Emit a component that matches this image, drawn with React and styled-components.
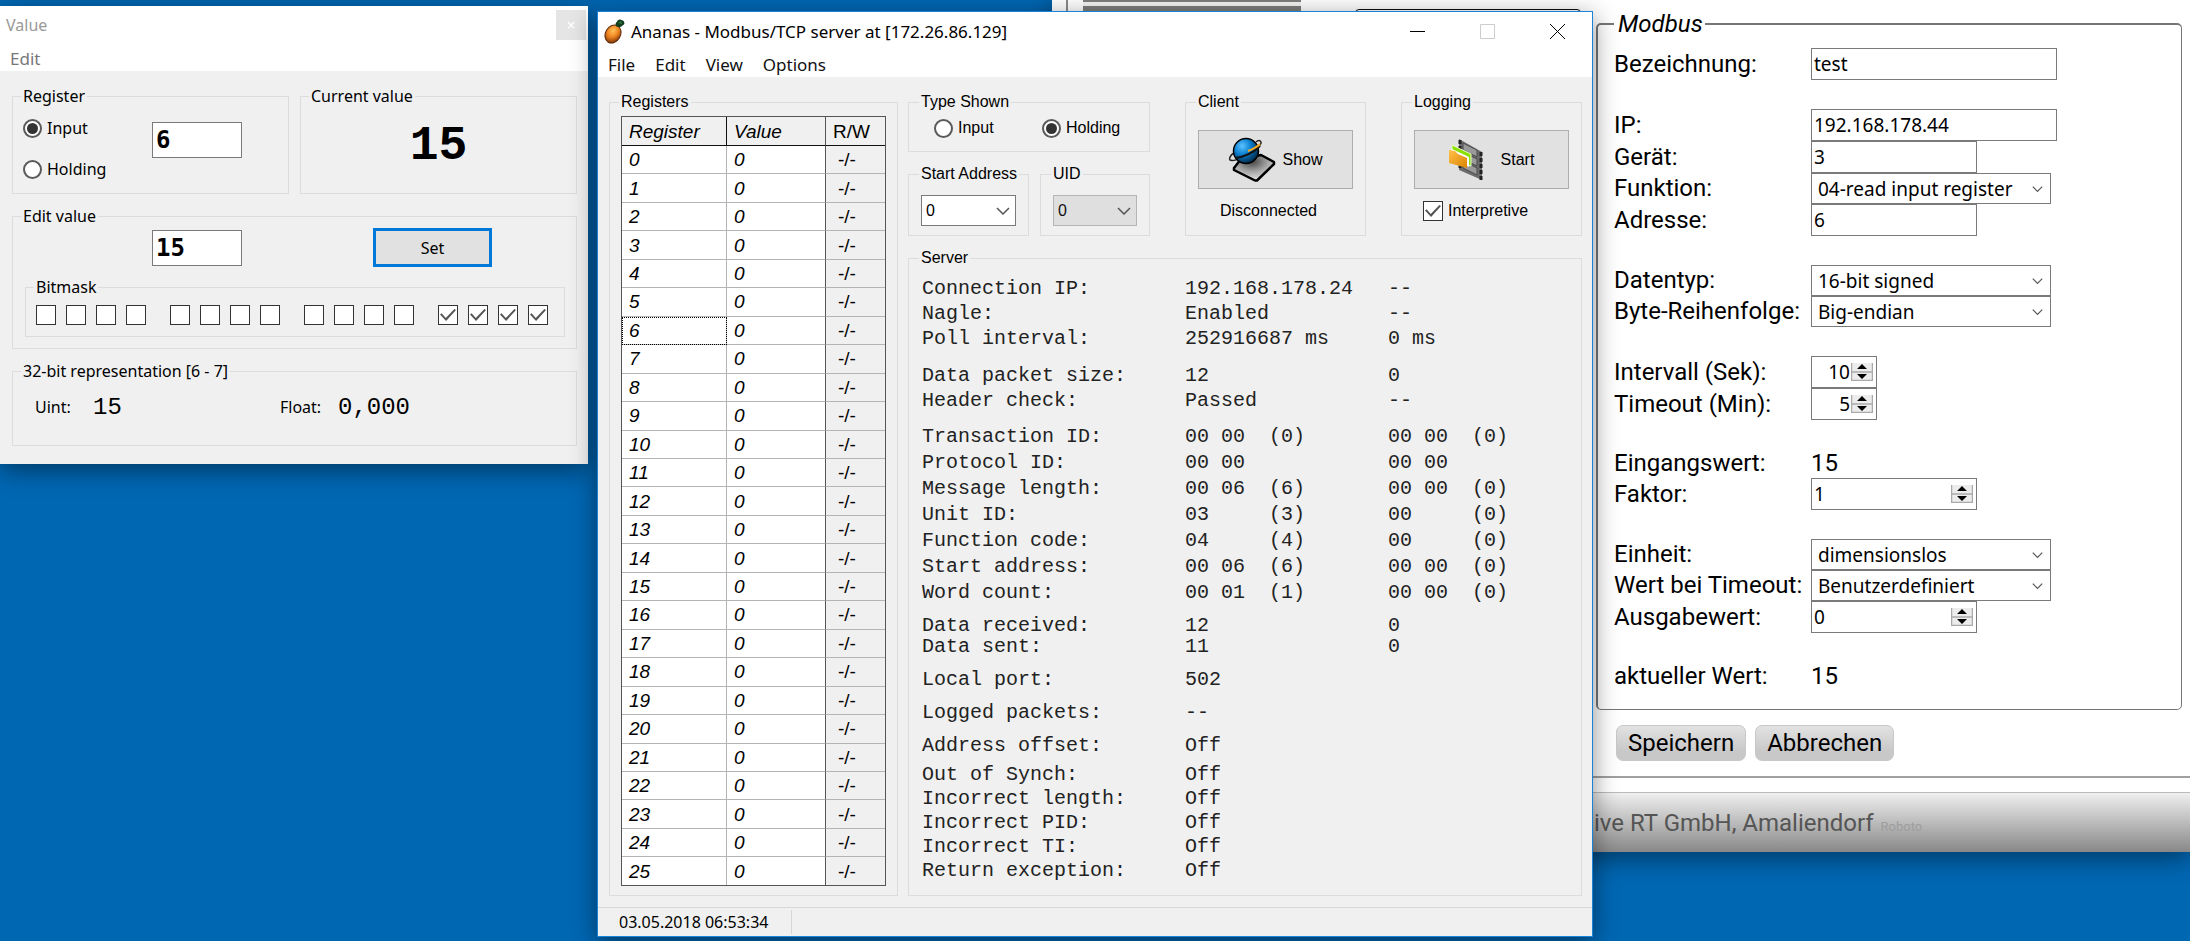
import React from "react";
import styled, { createGlobalStyle } from "styled-components";

const GlobalStyle = createGlobalStyle`
  * {
    box-sizing: border-box;
  }

  body {
    margin: 0;
    background: #0067b3;
    font-family: "Noto Sans", sans-serif;
    color: #000;
  }

  button, input, select {
    margin: 0;
    font-family: inherit;
    font-size: inherit;
    color: inherit;
  }
`;

const Desktop = styled.main`
  position: relative;
  min-height: 100vh;
  overflow: hidden;
  background: #0067b3;
`;

/* windows */

const Window = styled.section`
  position: absolute;
  background: #f0f0f0;
  box-shadow: 0 6px 24px rgba(0, 0, 0, 0.45);
`;

const ValueWindow = styled(Window)`
  left: 0;
  top: 6px;
  width: 588px;
  font-size: 16px;
`;

const ServerWindow = styled(Window)`
  left: 597px;
  top: 11px;
  width: 996px;
  border: 1px solid #1883d7;
  font-family: "Liberation Sans", Arial, sans-serif;
  font-size: 16px;
`;

const BrowserWindow = styled(Window)`
  left: 1052px;
  right: 0;
  top: 0;
  background: #fff;
  font-family: Roboto, sans-serif;
  font-size: 24px;
`;

const TitleBar = styled.header`
  display: flex;
  align-items: center;
  height: 40px;
  padding-left: 6px;
  padding-bottom: 2px;
  gap: 6px;
  background: #fff;
  font-family: "Noto Sans", sans-serif;
  font-size: ${(props) => (props.$inactive ? "16px" : "17px")};
  color: ${(props) => (props.$inactive ? "#999" : "#000")};
`;

const Title = styled.h1`
  flex: 1;
  margin: 0;
  font-size: inherit;
  font-weight: 400;
`;

const WindowButtons = styled.div`
  display: flex;
`;

const WindowButton = styled.button`
  display: flex;
  align-items: center;
  justify-content: center;
  width: 70px;
  height: 36px;
  padding: 0;
  border: 0;
  background: #fff;
`;

const GreyClose = styled.button`
  width: 30px;
  height: 30px;
  margin-right: 2px;
  padding: 0;
  border: 0;
  background: #e5e5e5;
  color: #fff;
`;

const MenuBar = styled.nav`
  display: flex;
  height: 25px;
  background: #fff;
  font-family: "Noto Sans", sans-serif;
  font-size: 17px;
`;

const MenuButton = styled.button`
  padding: 0 10px;
  border: 0;
  background: transparent;
  line-height: 24px;
  color: ${(props) => (props.$inactive ? "#777" : "#111")};
`;

/* shared controls */

const Group = styled.fieldset`
  min-width: 0;
  margin: 0;
  padding: 0 ${(props) => props.$pad || "10px"};
  border: 1px solid #dcdcdc;
`;

const GroupTitle = styled.legend`
  margin-left: -2px;
  padding: 0 2px;
  line-height: 20px;
  white-space: nowrap;
`;

const OptionLabel = styled.label`
  display: flex;
  align-items: center;
  gap: 5px;
  height: 20px;
`;

const Radio = styled.input.attrs({ type: "radio" })`
  appearance: none;
  display: grid;
  place-content: center;
  width: 19px;
  height: 19px;
  border: 2px solid #5a5a5a;
  border-radius: 50%;
  background: #fff;

  &:checked::before {
    content: "";
    width: 11px;
    height: 11px;
    border-radius: 50%;
    background: #333;
  }
`;

const Checkbox = styled.input.attrs({ type: "checkbox" })`
  appearance: none;
  display: grid;
  place-content: center;
  width: 20px;
  height: 20px;
  border: 1px solid #333;
  background: #fff;

  &:checked::before {
    content: "";
    width: 16px;
    height: 12px;
    background: #555;
    clip-path: polygon(0 45%, 10% 36%, 36% 76%, 90% 0, 100% 8%, 38% 100%);
  }
`;

const PushButton = styled.button`
  display: flex;
  align-items: center;
  justify-content: center;
  padding: 0;
  border: 1px solid #adadad;
  background: #e1e1e1;
`;

const SelectBox = styled.span`
  position: relative;
  display: block;
  width: ${(props) => props.$width};

  svg {
    position: absolute;
    right: ${(props) => props.$arrow || "6px"};
    top: 50%;
    margin-top: -4px;
    pointer-events: none;
  }
`;

const Select = styled.select`
  appearance: none;
  display: block;
  width: 100%;
  height: 31px;
  padding: 0 4px;
  border: 1px solid #7a7a7a;
  border-radius: 0;
  background: #fff;

  &:disabled {
    border-color: #b5b5b5;
    background: #dfdfdf;
    color: #111;
    opacity: 1;
  }
`;

/* value window */

const ValueBody = styled.div`
  display: flex;
  flex-direction: column;
  gap: 12px;
  padding: 15px 11px 18px 12px;
`;

const TwoColumns = styled.div`
  display: grid;
  grid-template-columns: 1fr 1fr;
  gap: 11px;
`;

const RegisterRow = styled.div`
  display: flex;
  padding: 12px 0 14px;
`;

const RadioColumn = styled.div`
  display: flex;
  flex-direction: column;
  gap: 21px;
  width: 129px;
`;

const NumberBox = styled.input.attrs({ type: "text" })`
  width: 90px;
  height: 36px;
  margin-top: 4px;
  padding: 0 3px;
  border: 1px solid #7a7a7a;
  background: #fff;
  font-family: "DejaVu Sans Mono", monospace;
  font-size: 24px;
  font-weight: 700;
`;

const BigValue = styled.output`
  display: block;
  padding-top: 12px;
  font-family: "Liberation Mono", monospace;
  font-size: 48px;
  font-weight: 700;
  line-height: 56px;
  text-align: center;
`;

const EditRow = styled.div`
  display: flex;
  gap: 131px;
  padding: 0 0 10px 127px;
`;

const SetButton = styled(PushButton)`
  width: 119px;
  height: 39px;
  margin-top: 2px;
  border: 3px solid #0078d7;
`;

const BitRow = styled.div`
  display: flex;
  gap: 24px;
  padding: 8px 0 11px;
`;

const Nibble = styled.div`
  display: flex;
  gap: 10px;
`;

const EditGroup = styled(Group)`
  padding: 0 11px 11px 12px;

  > ${GroupTitle} {
    margin-left: -4px;
  }
`;

const WordRow = styled.div`
  display: grid;
  grid-template-columns: 58px 187px 58px 1fr;
  align-items: center;
  padding: 9px 12px 20px;
  line-height: 35px;
`;

const WordValue = styled.output`
  font-family: "Liberation Mono", monospace;
  font-size: 24px;
`;

/* server window */

const ServerBody = styled.div`
  display: grid;
  grid-template-columns: 289px 1fr;
  gap: 10px;
  padding: 15px 10px 11px 11px;
`;

const ServerColumn = styled.div`
  display: flex;
  flex-direction: column;
  gap: 12px;
`;

const ControlRow = styled.div`
  display: grid;
  grid-template-columns: 1fr 181px 181px;
  gap: 35px;
`;

const TypeRow = styled.div`
  display: grid;
  grid-template-columns: 108px 1fr;
  padding: 6px 0 13px 13px;
`;

const SmallGroups = styled.div`
  display: grid;
  grid-template-columns: 121px 1fr;
  gap: 11px;
`;

const SelectPad = styled.div`
  padding: 11px 0 9px;
`;

const ActionPad = styled.div`
  display: flex;
  flex-direction: column;
  align-items: flex-start;
  gap: 12px;
  padding-top: 18px;
`;

const ActionButton = styled(PushButton)`
  gap: ${(props) => props.$gap};
  width: 100%;
  height: 59px;
`;

const ActionNote = styled.div`
  padding-left: ${(props) => props.$indent};
  line-height: 20px;
`;

const RegisterTable = styled.table`
  width: 100%;
  height: 770px;
  margin: 4px 0 9px;
  table-layout: fixed;
  border: 1px solid #555;
  border-spacing: 0;
  background: #fff;
  font-size: 19px;
  font-style: italic;

  th, td {
    padding: 1px 0 0 7px;
    border-right: 1px solid #b4b4b4;
    border-bottom: 1px solid #b4b4b4;
    font-weight: 400;
    text-align: left;
  }

  th {
    height: 29px;
    border-color: #111;
    background: #f0f0f0;
  }

  tr > :nth-child(2) {
    border-right-color: #555;
  }

  tr > :last-child {
    border-right: 0;
    background: #f0f0f0;
    font-style: normal;
  }

  tbody tr:last-child td {
    border-bottom: 0;
  }

  td:last-child {
    padding-left: 12px;
  }
`;

const RegisterCell = styled.td`
  outline: ${(props) => (props.$focused ? "1px dotted #000" : "none")};
  outline-offset: -1px;
`;

const InfoTable = styled.table`
  width: 100%;
  margin: 8px 0 12px 1px;
  table-layout: fixed;
  border-spacing: 0;
  font-family: "Liberation Mono", monospace;
  font-size: 20px;
  color: #222;
`;

const InfoBlock = styled.tbody`
  th, td {
    padding: 0;
    font-weight: 400;
    text-align: left;
    white-space: pre;
    line-height: ${(props) => props.$row}px;
  }

  tr:first-child > * {
    padding-top: ${(props) => props.$gap}px;
  }
`;

const StatusBar = styled.footer`
  display: flex;
  height: 29px;
  padding: 2px 0;
  border-top: 1px solid #d7d7d7;
  font-family: "Noto Sans", sans-serif;
`;

const StatusCell = styled.span`
  width: 194px;
  padding-left: 21px;
  border-right: 1px solid #d7d7d7;
  line-height: 24px;
`;

/* browser window */

const Page = styled.div`
  display: grid;
  grid-template-columns: 528px 1fr;
  margin-left: 14px;
  border-left: 2px solid #8a8a8a;
  border-bottom: 2px solid #a0a0a0;
`;

const SideMenu = styled.div`
  display: flex;
  justify-content: space-between;
  align-items: flex-start;
  padding: 0 15px 0 15px;
`;

const SideBars = styled.div`
  width: 218px;
  height: 30px;
  border-top: 2px solid #7d7d7b;
  background: linear-gradient(#f4f4f4 4px, #7d7d7b 4px);
`;

const SideBox = styled.div`
  width: 226px;
  height: 30px;
  margin-top: 9px;
  border: 1px solid #111;
  border-radius: 4px;
`;

const Form = styled.form`
  padding: 10px 8px 15px 0;
`;

const FormGroup = styled.fieldset`
  margin: 0;
  padding: 10px 16px 18px;
  border: 2px solid #767676;
  border-bottom-width: 1px;
  border-right-width: 1px;
  border-radius: 5px;
`;

const FormTitle = styled.legend`
  padding: 0 2px 0 4px;
  line-height: 28px;
  font-style: italic;
`;

const FieldRow = styled.div`
  display: grid;
  grid-template-columns: 197px 1fr;
  align-items: center;
  margin-top: ${(props) => (props.$spaced ? "29px" : 0)};
  line-height: 29px;
`;

const TextInput = styled.input.attrs({ type: "text" })`
  width: ${(props) => props.$width};
  height: 32px;
  padding: 0 2px;
  border: 1px solid #7a7a7a;
  font-family: "Noto Sans", sans-serif;
  font-size: 19px;
`;

const NumberField = styled.span`
  display: flex;
  align-items: center;
  width: ${(props) => props.$width};
  height: 32px;
  padding-right: 3px;
  border: 1px solid #7a7a7a;
`;

const NumberInput = styled.input.attrs({ type: "number" })`
  flex: 1;
  min-width: 0;
  height: 30px;
  padding: 0 1px 0 2px;
  border: 0;
  background: transparent;
  appearance: textfield;
  font-family: "Noto Sans", sans-serif;
  font-size: 19px;
  text-align: ${(props) => props.$align || "left"};

  &::-webkit-inner-spin-button {
    display: none;
  }
`;

const FormSelect = styled(Select)`
  font-family: "Noto Sans", sans-serif;
  font-size: 19px;
  padding: 0 6px;
`;

const FormActions = styled.div`
  display: flex;
  gap: 9px;
  padding: 15px 0 0 20px;
`;

const FormButton = styled.button`
  height: 36px;
  padding: 0 11px;
  border: 1px solid #c8c8c8;
  border-radius: 7px;
  background: linear-gradient(#e2e2e2, #c8c8c8 75%);
  line-height: 32px;
`;

const PageFooter = styled.footer`
  display: flex;
  align-items: baseline;
  gap: 7px;
  height: 60px;
  margin-top: 14px;
  padding-left: 542px;
  border-top: 1px solid #bbb;
  background: linear-gradient(#efefef, #888);
  line-height: 60px;
  color: #555;
`;

const FontNote = styled.small`
  font-size: 13px;
  color: #9d9d9d;
`;

/* icons */

const Chevron = ({ size = 14 }) => (
  <svg width={size} height="8" viewBox="0 0 14 8" fill="none" stroke="#555" strokeWidth="1.5">
    <path d="M1 1l6 6 6-6" />
  </svg>
);

const SpinArrows = () => (
  <svg width="22" height="18" viewBox="0 0 22 18">
    <rect width="22" height="18" fill="#ececec" />
    <path d="M.5 0v17.500h21V0M0 9h22" fill="none" stroke="#aaa" strokeWidth="1.500" />
    <path d="M6 6l5-5 5 5zM6 11h10l-5 5z" fill="#000" />
  </svg>
);

const PineappleIcon = () => (
  <svg width="21" height="25" viewBox="0 0 21 25">
    <defs>
      <radialGradient id="fruit" cx=".4" cy=".35" r=".7">
        <stop offset="0" stopColor="#ffc35a" />
        <stop offset=".5" stopColor="#ee8420" />
        <stop offset="1" stopColor="#7a3205" />
      </radialGradient>
    </defs>
    <ellipse cx="9" cy="15" rx="7.500" ry="9.500" transform="rotate(30 9 15)" fill="url(#fruit)" stroke="#5b2a0a" />
    <path d="M12 7c-1-2 0-4 1-4 0-2 3-3 4-2 2 0 3 1 3 2 1 1 0 3-1 3-1 2-5 3-7 1z" fill="#123d1e" />
    <path d="M14 4l3-2 1 3z" fill="#2f7a45" />
  </svg>
);

const GlobeIcon = () => (
  <svg width="48" height="46" viewBox="0 0 48 46">
    <defs>
      <radialGradient id="globe" cx=".35" cy=".3" r=".75">
        <stop offset="0" stopColor="#5cc4ff" />
        <stop offset=".45" stopColor="#0b7fd0" />
        <stop offset="1" stopColor="#01243f" />
      </radialGradient>
      <radialGradient id="pad" cx=".45" cy=".25" r=".8">
        <stop offset="0" stopColor="#444" />
        <stop offset=".5" stopColor="#a5a5a5" />
        <stop offset="1" stopColor="#eee" />
      </radialGradient>
    </defs>
    <path d="M6 31l7-9 20-4 13 7v2L29 43.500h-2L6 33z" fill="url(#pad)" stroke="#000" strokeWidth="2.500" strokeLinejoin="round" />
    <path d="M6 16c-4 2-5 6-4 7 2 1 9 0 16-4S34 8 33 5c-1-2-3-2-5 0" fill="none" stroke="#222" strokeWidth="1.500" />
    <circle cx="18" cy="14" r="12.500" fill="url(#globe)" stroke="#000" strokeWidth="1.500" />
    <path d="M7 21c9-1 18-5 25-12" fill="none" stroke="#111" strokeWidth="2" />
    <path d="M20 14c5-2 9-4 12-7" fill="none" stroke="#f5a623" strokeWidth="2" />
  </svg>
);

const FilmIcon = () => (
  <svg width="34" height="42" viewBox="0 0 34 42">
    <defs>
      <linearGradient id="folder" x1="0" y1="0" x2="1" y2="1">
        <stop offset="0" stopColor="#ffc04a" />
        <stop offset="1" stopColor="#dc8400" />
      </linearGradient>
    </defs>
    <path d="M10 0l23 13v28L10 31z" fill="#6c6c6c" />
    <path d="M14 4l14 7v7l-14-7zM14 13l14 7v7l-14-7zM14 22l14 7v7l-14-7z" fill="#999" stroke="#4a4a4a" />
    <path d="M11 1v30M32 13v28" stroke="#222" strokeWidth="3" strokeDasharray="4 2" />
    <path d="M3 6l4 2 15 7v12L3 20z" fill="#8be000" stroke="#e8ffc0" />
    <path d="M3 10l17 8v10L3 20z" fill="#fff" />
    <path d="M0 11l6 1 3 3 9 4v10L0 24z" fill="url(#folder)" />
  </svg>
);

const infoBlocks = [
  {
    row: 25,
    gap: 0,
    lines: [
      ["Connection IP:", "192.168.178.24", "--"],
      ["Nagle:", "Enabled", "--"],
      ["Poll interval:", "252916687 ms", "0 ms"],
    ],
  },
  {
    row: 25,
    gap: 12,
    lines: [
      ["Data packet size:", "12", "0"],
      ["Header check:", "Passed", "--"],
    ],
  },
  {
    row: 26,
    gap: 11,
    lines: [
      ["Transaction ID:", "00 00  (0)", "00 00  (0)"],
      ["Protocol ID:", "00 00", "00 00"],
      ["Message length:", "00 06  (6)", "00 00  (0)"],
      ["Unit ID:", "03     (3)", "00     (0)"],
      ["Function code:", "04     (4)", "00     (0)"],
      ["Start address:", "00 06  (6)", "00 00  (0)"],
      ["Word count:", "00 01  (1)", "00 00  (0)"],
    ],
  },
  {
    row: 21,
    gap: 9,
    lines: [
      ["Data received:", "12", "0"],
      ["Data sent:", "11", "0"],
    ],
  },
  { row: 25, gap: 10, lines: [["Local port:", "502", ""]] },
  { row: 25, gap: 8, lines: [["Logged packets:", "--", ""]] },
  { row: 25, gap: 8, lines: [["Address offset:", "Off", ""]] },
  {
    row: 24,
    gap: 5,
    lines: [
      ["Out of Synch:", "Off", ""],
      ["Incorrect length:", "Off", ""],
      ["Incorrect PID:", "Off", ""],
      ["Incorrect TI:", "Off", ""],
      ["Return exception:", "Off", ""],
    ],
  },
];

const formFields = [
  { id: "name", label: "Bezeichnung:", type: "text", value: "test", width: "246px" },
  { id: "ip", label: "IP:", type: "text", value: "192.168.178.44", width: "246px", spaced: true },
  { id: "device", label: "Gerät:", type: "text", value: "3", width: "166px" },
  { id: "function", label: "Funktion:", type: "select", value: "04-read input register" },
  { id: "address", label: "Adresse:", type: "text", value: "6", width: "166px" },
  { id: "datatype", label: "Datentyp:", type: "select", value: "16-bit signed", spaced: true },
  { id: "order", label: "Byte-Reihenfolge:", type: "select", value: "Big-endian" },
  { id: "interval", label: "Intervall (Sek):", type: "number", value: "10", width: "66px", align: "right", spaced: true },
  { id: "timeout", label: "Timeout (Min):", type: "number", value: "5", width: "66px", align: "right" },
  { id: "input", label: "Eingangswert:", type: "output", value: "15", spaced: true },
  { id: "factor", label: "Faktor:", type: "number", value: "1", width: "166px" },
  { id: "unit", label: "Einheit:", type: "select", value: "dimensionslos", spaced: true },
  { id: "fallback", label: "Wert bei Timeout:", type: "select", value: "Benutzerdefiniert" },
  { id: "output", label: "Ausgabewert:", type: "number", value: "0", width: "166px" },
  { id: "current", label: "aktueller Wert:", type: "output", value: "15", spaced: true },
];

function Field({ field }) {
  if (field.type === "text") {
    return <TextInput id={field.id} $width={field.width} defaultValue={field.value} />;
  }
  if (field.type === "number") {
    return (
      <NumberField $width={field.width}>
        <NumberInput id={field.id} $align={field.align} defaultValue={field.value} />
        <SpinArrows />
      </NumberField>
    );
  }
  if (field.type === "select") {
    return (
      <SelectBox $width="240px" $arrow="8px">
        <FormSelect id={field.id}>
          <option>{field.value}</option>
        </FormSelect>
        <Chevron size={11} />
      </SelectBox>
    );
  }
  return <output id={field.id}>{field.value}</output>;
}

function Browser() {
  return (
    <BrowserWindow>
      <Page>
        <SideMenu>
          <SideBars />
          <SideBox />
        </SideMenu>
        <Form>
          <FormGroup>
            <FormTitle>Modbus</FormTitle>
            {formFields.map((field) => (
              <FieldRow key={field.id} $spaced={field.spaced}>
                <label htmlFor={field.id}>{field.label}</label>
                <Field field={field} />
              </FieldRow>
            ))}
          </FormGroup>
          <FormActions>
            <FormButton type="button">Speichern</FormButton>
            <FormButton type="button">Abbrechen</FormButton>
          </FormActions>
        </Form>
      </Page>
      <PageFooter>
        <span>ive RT GmbH, Amaliendorf</span>
        <FontNote>Roboto</FontNote>
      </PageFooter>
    </BrowserWindow>
  );
}

function ValueEditor() {
  return (
    <ValueWindow>
      <TitleBar $inactive>
        <Title>Value</Title>
        <GreyClose aria-label="Close">×</GreyClose>
      </TitleBar>
      <MenuBar>
        <MenuButton $inactive>Edit</MenuButton>
      </MenuBar>
      <ValueBody>
        <TwoColumns>
          <Group>
            <GroupTitle>Register</GroupTitle>
            <RegisterRow>
              <RadioColumn>
                <OptionLabel>
                  <Radio name="register" defaultChecked />
                  Input
                </OptionLabel>
                <OptionLabel>
                  <Radio name="register" />
                  Holding
                </OptionLabel>
              </RadioColumn>
              <NumberBox aria-label="Register" defaultValue="6" />
            </RegisterRow>
          </Group>
          <Group>
            <GroupTitle>Current value</GroupTitle>
            <BigValue>15</BigValue>
          </Group>
        </TwoColumns>
        <EditGroup>
          <GroupTitle>Edit value</GroupTitle>
          <EditRow>
            <NumberBox aria-label="Edit value" defaultValue="15" />
            <SetButton>Set</SetButton>
          </EditRow>
          <Group>
            <GroupTitle>Bitmask</GroupTitle>
            <BitRow>
              {[0, 1, 2, 3].map((nibble) => (
                <Nibble key={nibble}>
                  {[0, 1, 2, 3].map((bit) => (
                    <Checkbox
                      key={bit}
                      aria-label={`Bit ${15 - nibble * 4 - bit}`}
                      defaultChecked={nibble === 3}
                    />
                  ))}
                </Nibble>
              ))}
            </BitRow>
          </Group>
        </EditGroup>
        <Group>
          <GroupTitle>32-bit representation [6 - 7]</GroupTitle>
          <WordRow>
            <span>Uint:</span>
            <WordValue>15</WordValue>
            <span>Float:</span>
            <WordValue>0,000</WordValue>
          </WordRow>
        </Group>
      </ValueBody>
    </ValueWindow>
  );
}

function Registers() {
  return (
    <Group $pad="11px">
      <GroupTitle>Registers</GroupTitle>
      <RegisterTable>
        <colgroup>
          <col width="105" />
          <col width="99" />
          <col />
        </colgroup>
        <thead>
          <tr>
            <th>Register</th>
            <th>Value</th>
            <th>R/W</th>
          </tr>
        </thead>
        <tbody>
          {Array.from({ length: 26 }, (_, i) => (
            <tr key={i}>
              <RegisterCell $focused={i === 6}>{i}</RegisterCell>
              <td>0</td>
              <td>-/-</td>
            </tr>
          ))}
        </tbody>
      </RegisterTable>
    </Group>
  );
}

function AddressSelect({ title, disabled }) {
  return (
    <Group $pad="12px">
      <GroupTitle>{title}</GroupTitle>
      <SelectPad>
        <SelectBox $width="100%">
          <Select aria-label={title} disabled={disabled}>
            <option>0</option>
          </Select>
          <Chevron />
        </SelectBox>
      </SelectPad>
    </Group>
  );
}

function Server() {
  return (
    <ServerWindow>
      <TitleBar>
        <PineappleIcon />
        <Title>Ananas - Modbus/TCP server at [172.26.86.129]</Title>
        <WindowButtons>
          <WindowButton aria-label="Minimize">
            <svg width="15" height="15" stroke="#000"><path d="M0 7.500h15" /></svg>
          </WindowButton>
          <WindowButton aria-label="Maximize">
            <svg width="15" height="15" stroke="#ccc" fill="none"><path d="M.5 .5h14v14h-14z" /></svg>
          </WindowButton>
          <WindowButton aria-label="Close">
            <svg width="15" height="15" stroke="#000"><path d="M0 0l15 15M15 0L0 15" /></svg>
          </WindowButton>
        </WindowButtons>
      </TitleBar>
      <MenuBar>
        <MenuButton>File</MenuButton>
        <MenuButton>Edit</MenuButton>
        <MenuButton>View</MenuButton>
        <MenuButton>Options</MenuButton>
      </MenuBar>
      <ServerBody>
        <Registers />
        <ServerColumn>
          <ControlRow>
            <ServerColumn>
              <Group $pad="12px">
                <GroupTitle>Type Shown</GroupTitle>
                <TypeRow>
                  <OptionLabel>
                    <Radio name="type" />
                    Input
                  </OptionLabel>
                  <OptionLabel>
                    <Radio name="type" defaultChecked />
                    Holding
                  </OptionLabel>
                </TypeRow>
              </Group>
              <SmallGroups>
                <AddressSelect title="Start Address" />
                <AddressSelect title="UID" disabled />
              </SmallGroups>
            </ServerColumn>
            <Group $pad="12px">
              <GroupTitle>Client</GroupTitle>
              <ActionPad>
                <ActionButton $gap="6px">
                  <GlobeIcon />
                  Show
                </ActionButton>
                <ActionNote $indent="22px">Disconnected</ActionNote>
              </ActionPad>
            </Group>
            <Group $pad="12px">
              <GroupTitle>Logging</GroupTitle>
              <ActionPad>
                <ActionButton $gap="18px">
                  <FilmIcon />
                  Start
                </ActionButton>
                <ActionNote $indent="9px">
                  <OptionLabel>
                    <Checkbox defaultChecked />
                    Interpretive
                  </OptionLabel>
                </ActionNote>
              </ActionPad>
            </Group>
          </ControlRow>
          <Group $pad="12px">
            <GroupTitle>Server</GroupTitle>
            <InfoTable>
              <colgroup>
                <col width="263" />
                <col width="203" />
                <col />
              </colgroup>
              {infoBlocks.map((block) => (
                <InfoBlock key={block.lines[0][0]} $row={block.row} $gap={block.gap}>
                  {block.lines.map(([name, request, response]) => (
                    <tr key={name}>
                      <th scope="row">{name}</th>
                      <td>{request}</td>
                      <td>{response}</td>
                    </tr>
                  ))}
                </InfoBlock>
              ))}
            </InfoTable>
          </Group>
        </ServerColumn>
      </ServerBody>
      <StatusBar>
        <StatusCell>03.05.2018 06:53:34</StatusCell>
      </StatusBar>
    </ServerWindow>
  );
}

function App() {
  return (
    <>
      <GlobalStyle />
      <Desktop>
        <Browser />
        <ValueEditor />
        <Server />
      </Desktop>
    </>
  );
}

export default App;
